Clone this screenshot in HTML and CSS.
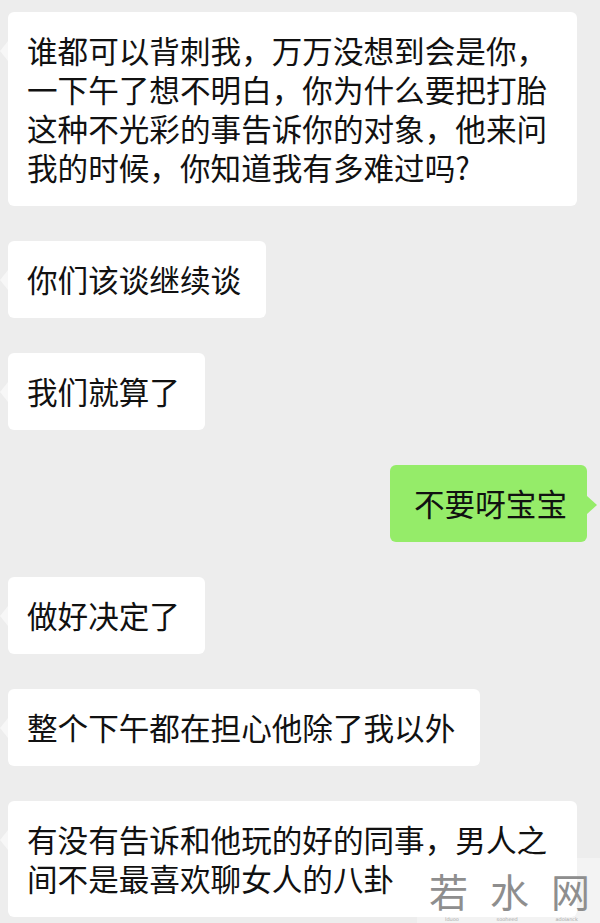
FILE: index.html
```html
<!DOCTYPE html>
<html lang="zh-CN">

<head>
    <meta charset="UTF-8">
    <meta name="viewport" content="width=device-width, initial-scale=1.0">
    <title>聊天记录</title>
    <link rel="stylesheet" href="styles.css">
</head>

<body>
    <div class="page">
        <main class="chat">
            <div class="row">
                <p class="bubble left">谁都可以背刺我，万万没想到会是你，一下午了想不明白，你为什么要把打胎这种不光彩的事告诉你的对象，他来问我的时候，你知道我有多难过吗?</p>
            </div>
            <div class="row">
                <p class="bubble left">你们该谈继续谈</p>
            </div>
            <div class="row">
                <p class="bubble left">我们就算了</p>
            </div>
            <div class="row mine">
                <p class="bubble right">不要呀宝宝</p>
            </div>
            <div class="row">
                <p class="bubble left">做好决定了</p>
            </div>
            <div class="row">
                <p class="bubble left">整个下午都在担心他除了我以外</p>
            </div>
            <div class="row">
                <p class="bubble left">有没有告诉和他玩的好的同事，男人之间不是最喜欢聊女人的八卦</p>
            </div>
        </main>

        <!-- site watermark over the bottom corner -->
        <div class="watermark">
            <div class="wm-name">
                <span>若</span><span>水</span><span>网</span>
            </div>
            <div class="wm-sub">
                <span>lduoo</span><span>sooheed</span><span>adoianck</span>
            </div>
        </div>
    </div>
</body>

</html>
```

FILE: styles.css
```css
/* General Styles */
body {
    margin: 0;
    padding: 0;
    background-color: #ededed;
    font-family: "Noto Sans CJK SC", "Noto Sans", sans-serif;
    color: #111;
}

.page {
    position: relative;
    height: 923px;
    overflow: hidden;
}

.chat {
    display: flex;
    flex-direction: column;
    gap: 35px;
    padding: 12px 13px 0 8px;
}

.row {
    display: flex;
    justify-content: flex-start;
}

.row.mine {
    justify-content: flex-end;
}

/* Bubbles */
.bubble {
    position: relative;
    margin: 0;
    max-width: 569px;
    box-sizing: border-box;
    font-size: 30.6px;
    line-height: 39px;
    border-radius: 6px;
}

.bubble.left {
    background-color: #fff;
    padding: 19px 25px 19px 19px;
}

.bubble.left::before {
    content: "";
    position: absolute;
    left: -8px;
    top: 29px;
    border-top: 10px solid transparent;
    border-bottom: 10px solid transparent;
    border-right: 8px solid rgba(255, 255, 255, 0.55);
}

.bubble.right {
    background-color: #95ec69;
    padding: 19px 20px 19px 24px;
}

.bubble.right::after {
    content: "";
    position: absolute;
    right: -10px;
    top: 31px;
    border-top: 9px solid transparent;
    border-bottom: 9px solid transparent;
    border-left: 10px solid #95ec69;
}

/* Watermark */
.watermark {
    position: absolute;
    right: 0;
    bottom: 0;
    width: 183px;
    height: 65px;
    box-sizing: border-box;
    padding: 12px 10px 0 12px;
    background-color: rgba(255, 255, 255, 0.35);
    display: flex;
    flex-direction: column;
}

.wm-name {
    display: flex;
    justify-content: space-between;
    font-size: 39px;
    line-height: 40px;
    color: #8e8e8e;
}

.wm-sub {
    display: flex;
    justify-content: space-between;
    margin-top: 6px;
    padding: 0 12px 0 16px;
    font-family: "DejaVu Sans", sans-serif;
    font-size: 5px;
    line-height: 6px;
    color: #a8a8a8;
}
```
